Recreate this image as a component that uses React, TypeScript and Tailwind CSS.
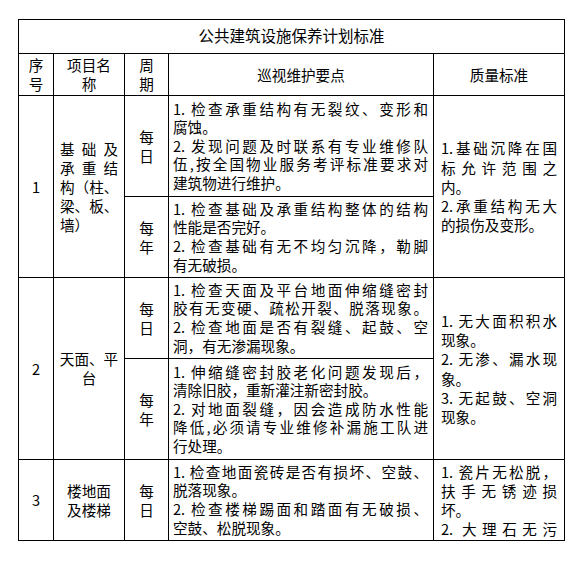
import React from "react";

type L = { t: string; j?: boolean };

function Lines({ lines }: { lines: L[] }) {
  return (
    <>
      {lines.map((l, i) => (
        <div
          key={i}
          className={l.j ? "text-justify [text-align-last:justify] whitespace-nowrap" : "whitespace-nowrap"}
        >
          {l.t}
        </div>
      ))}
    </>
  );
}

const td = "border border-black align-middle p-0";

function Body({ lines }: { lines: L[] }) {
  return (
    <td className={`${td} pl-[4px] pr-[5px] leading-[18.6px]`}>
      <Lines lines={lines} />
    </td>
  );
}

function Quality({ lines }: { lines: L[] }) {
  return (
    <td className={`${td} pl-[7px] pr-[7px] leading-[19.2px]`}>
      <Lines lines={lines} />
    </td>
  );
}

function Period({ a, b }: { a: string; b: string }) {
  return (
    <td className={`${td} text-center leading-[19px]`}>
      <div>{a}</div>
      <div>{b}</div>
    </td>
  );
}

export default function App() {
  return (
    <div className="min-h-[561px] w-[580px] bg-white pl-[18px] pt-[19px] text-black font-['Noto_Sans_CJK_SC','Noto_Sans',sans-serif] text-[14.6px]">
      <table className="w-[546px] table-fixed border-collapse border border-black">
        <colgroup>
          <col className="w-[35px]" />
          <col className="w-[71px]" />
          <col className="w-[44px]" />
          <col className="w-[265px]" />
          <col className="w-[131px]" />
        </colgroup>
        <tbody>
          <tr className="h-[34px]">
            <td colSpan={5} className={`${td} text-center text-[15.5px] leading-[18px] pb-[4px]`}>
              公共建筑设施保养计划标准
            </td>
          </tr>
          <tr className="h-[42px]">
            <td className={`${td} text-center leading-[18.5px]`}>
              <div>序</div>
              <div>号</div>
            </td>
            <td className={`${td} text-center leading-[18.5px]`}>
              <div>项目名</div>
              <div>称</div>
            </td>
            <td className={`${td} text-center leading-[18.5px]`}>
              <div>周</div>
              <div>期</div>
            </td>
            <td className={`${td} text-center`}>巡视维护要点</td>
            <td className={`${td} text-center`}>质量标准</td>
          </tr>

          <tr className="h-[101px]">
            <td rowSpan={2} className={`${td} text-center`}>1</td>
            <td rowSpan={2} className={`${td} px-[6px] leading-[19px]`}>
              <Lines
                lines={[
                  { t: "基础及", j: true },
                  { t: "承重结", j: true },
                  { t: "构（柱、", j: true },
                  { t: "梁、板、", j: true },
                  { t: "墙）" },
                ]}
              />
            </td>
            <Period a="每" b="日" />
            <Body
              lines={[
                { t: "1. 检查承重结构有无裂纹、变形和", j: true },
                { t: "腐蚀。" },
                { t: "2. 发现问题及时联系有专业维修队", j: true },
                { t: "伍,按全国物业服务考评标准要求对", j: true },
                { t: "建筑物进行维护。" },
              ]}
            />
            <td rowSpan={2} className={`${td} pl-[7px] pr-[7px] leading-[19.2px]`}>
              <Lines
                lines={[
                  { t: "1.基础沉降在国", j: true },
                  { t: "标允许范围之", j: true },
                  { t: "内。" },
                  { t: "2.承重结构无大", j: true },
                  { t: "的损伤及变形。" },
                ]}
              />
            </td>
          </tr>
          <tr className="h-[81px]">
            <Period a="每" b="年" />
            <Body
              lines={[
                { t: "1. 检查基础及承重结构整体的结构", j: true },
                { t: "性能是否完好。" },
                { t: "2. 检查基础有无不均匀沉降，勒脚", j: true },
                { t: "有无破损。" },
              ]}
            />
          </tr>

          <tr className="h-[81px]">
            <td rowSpan={2} className={`${td} text-center`}>2</td>
            <td rowSpan={2} className={`${td} text-center leading-[18.5px]`}>
              <div>天面、平</div>
              <div>台</div>
            </td>
            <Period a="每" b="日" />
            <Body
              lines={[
                { t: "1. 检查天面及平台地面伸缩缝密封", j: true },
                { t: "胶有无变硬、疏松开裂、脱落现象。", j: true },
                { t: "2. 检查地面是否有裂缝、起鼓、空", j: true },
                { t: "洞，有无渗漏现象。" },
              ]}
            />
            <td rowSpan={2} className={`${td} pl-[7px] pr-[7px] leading-[19.3px]`}>
              <Lines
                lines={[
                  { t: "1. 无大面积积水", j: true },
                  { t: "现象。" },
                  { t: "2. 无渗、漏水现", j: true },
                  { t: "象。" },
                  { t: "3. 无起鼓、空洞", j: true },
                  { t: "现象。" },
                ]}
              />
            </td>
          </tr>
          <tr className="h-[101px]">
            <Period a="每" b="年" />
            <Body
              lines={[
                { t: "1. 伸缩缝密封胶老化问题发现后，", j: true },
                { t: "清除旧胶，重新灌注新密封胶。" },
                { t: "2. 对地面裂缝，因会造成防水性能", j: true },
                { t: "降低,必须请专业维修补漏施工队进", j: true },
                { t: "行处理。" },
              ]}
            />
          </tr>

          <tr className="h-[81px]">
            <td className={`${td} text-center`}>3</td>
            <td className={`${td} text-center leading-[19px]`}>
              <div>楼地面</div>
              <div>及楼梯</div>
            </td>
            <Period a="每" b="日" />
            <Body
              lines={[
                { t: "1. 检查地面瓷砖是否有损坏、空鼓、", j: true },
                { t: "脱落现象。" },
                { t: "2. 检查楼梯踢面和踏面有无破损、", j: true },
                { t: "空鼓、松脱现象。" },
              ]}
            />
            <Quality
              lines={[
                { t: "1. 瓷片无松脱，", j: true },
                { t: "扶手无锈迹损", j: true },
                { t: "坏。" },
                { t: "2. 大理石无污", j: true },
              ]}
            />
          </tr>
        </tbody>
      </table>
    </div>
  );
}
